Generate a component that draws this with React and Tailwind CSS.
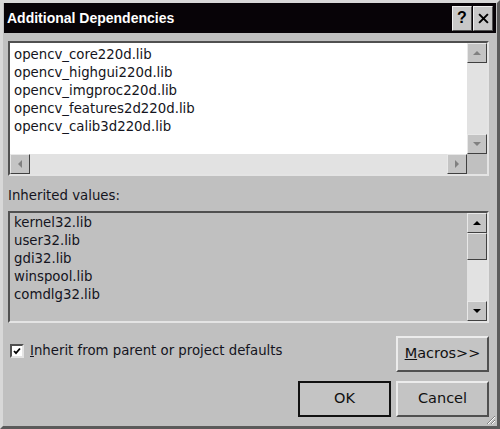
import React from 'react';

const font = { fontFamily: '"DejaVu Sans", "Liberation Sans", sans-serif' };

const Arrow = ({ dir, color }) => {
  const pts = {
    up: '1,5 5,1 9,5',
    down: '1,1 5,5 9,1',
    left: '5,1 1,5 5,9',
    right: '1,1 5,5 1,9',
  }[dir];
  const vb = dir === 'up' || dir === 'down' ? '0 0 10 6' : '0 0 6 10';
  const size = dir === 'up' || dir === 'down' ? 'w-[10px] h-[6px]' : 'w-[6px] h-[10px]';
  return (
    <svg viewBox={vb} className={size}>
      <polygon points={pts} fill={color} />
    </svg>
  );
};

const ScrollBtn = ({ dir, color = '#808080', className = '' }) => (
  <div
    className={`w-[20px] h-[20px] shrink-0 flex items-center justify-center bg-[#c4c4c4] border border-t-[#e8e8e8] border-l-[#e8e8e8] border-r-[#404040] border-b-[#404040] ${className}`}
  >
    <Arrow dir={dir} color={color} />
  </div>
);

const Button = ({ children, isDefault }) => (
  <button
    className={`w-[93px] h-[36px] flex items-center justify-center text-[14.5px] text-[#111] bg-[#c4c4c4] ${
      isDefault
        ? 'border-2 border-[#111]'
        : 'border-2 border-t-[#ececec] border-l-[#ececec] border-r-[#505050] border-b-[#505050]'
    }`}
    style={font}
  >
    {children}
  </button>
);

export default function App() {
  const deps = [
    'opencv_core220d.lib',
    'opencv_highgui220d.lib',
    'opencv_imgproc220d.lib',
    'opencv_features2d220d.lib',
    'opencv_calib3d220d.lib',
  ];
  const inherited = ['kernel32.lib', 'user32.lib', 'gdi32.lib', 'winspool.lib', 'comdlg32.lib'];

  return (
    <div
      className="w-[500px] h-[429px] bg-[#c0c0c0] border-[3px] border-t-[#d8d8d8] border-l-[#d8d8d8] border-r-[#5a5a5a] border-b-[#5a5a5a] flex flex-col relative overflow-hidden"
      style={font}
    >
      {/* title bar */}
      <div className="mx-[1px] h-[30px] bg-[#070307] flex items-center justify-between pl-[3px] pr-[3px]">
        <span
          className="text-white font-bold text-[14px]"
          style={{ fontFamily: '"Liberation Sans", Arial, sans-serif' }}
        >
          Additional Dependencies
        </span>
        <div className="flex gap-[1px]">
          <div className="w-[20px] h-[25px] bg-[#c8c8c8] border border-t-[#f0f0f0] border-l-[#f0f0f0] border-r-[#505050] border-b-[#505050] flex items-center justify-center text-black font-bold text-[16px]" style={{ fontFamily: '"Liberation Sans", sans-serif' }}>
            ?
          </div>
          <div className="w-[20px] h-[25px] bg-[#c8c8c8] border border-t-[#f0f0f0] border-l-[#f0f0f0] border-r-[#505050] border-b-[#505050] flex items-center justify-center">
            <svg viewBox="0 0 10 10" className="w-[11px] h-[11px]">
              <path d="M1 1 L9 9 M9 1 L1 9" stroke="#000" strokeWidth="1.8" />
            </svg>
          </div>
        </div>
      </div>

      <div className="pl-[5px] pr-[8px] pt-[8px] flex flex-col">
        {/* top list */}
        <div className="w-[481px] h-[135px] border-2 border-t-[#505050] border-l-[#505050] border-r-[#e4e4e4] border-b-[#e4e4e4] flex flex-col">
          <div className="flex flex-1 min-h-0">
            <div className="flex-1 bg-white pl-[4px] pt-[3px] text-[13.3px] leading-[18px] text-[#141420]">
              {deps.map((d) => (
                <div key={d}>{d}</div>
              ))}
            </div>
            <div className="w-[20px] flex flex-col bg-[#e2e2e2]">
              <ScrollBtn dir="up" />
              <div className="flex-1" />
              <ScrollBtn dir="down" />
            </div>
          </div>
          <div className="h-[20px] flex">
            <div className="flex-1 flex bg-[#e2e2e2]">
              <ScrollBtn dir="left" />
              <div className="flex-1" />
              <ScrollBtn dir="right" />
            </div>
            <div className="w-[20px] bg-[#c0c0c0]" />
          </div>
        </div>

        <div className="mt-[11px] h-[18px] text-[13.3px] leading-[18px] text-[#141420]">Inherited values:</div>

        {/* inherited list */}
        <div className="mt-[6px] w-[481px] h-[112px] border-2 border-t-[#505050] border-l-[#505050] border-r-[#e4e4e4] border-b-[#e4e4e4] flex">
          <div className="flex-1 pl-[4px] pt-[1px] text-[13.3px] leading-[18px] text-[#141420]">
            {inherited.map((d) => (
              <div key={d}>{d}</div>
            ))}
          </div>
          <div className="w-[20px] flex flex-col">
            <ScrollBtn dir="up" color="#000" />
            <div className="h-[27px] bg-[#c0c0c0] border border-t-[#e8e8e8] border-l-[#e8e8e8] border-r-[#404040] border-b-[#404040]" />
            <div className="flex-1 bg-[#e2e2e2]" />
            <ScrollBtn dir="down" color="#000" />
          </div>
        </div>

        {/* checkbox + macros */}
        <div className="mt-[13px] flex items-start justify-between">
          <div className="flex items-center gap-[6px] pl-[2px] pt-[6px]">
            <div className="w-[14px] h-[14px] bg-white border-2 border-t-[#505050] border-l-[#505050] border-r-[#e4e4e4] border-b-[#e4e4e4] flex items-center justify-center">
              <svg viewBox="0 0 8 8" className="w-[8px] h-[8px]">
                <path d="M1 4 L3 6.2 L7 1.5" stroke="#000" strokeWidth="1.8" fill="none" />
              </svg>
            </div>
            <span className="text-[13.3px] leading-[18px] text-[#141420]">
              <span className="underline">I</span>nherit from parent or project defaults
            </span>
          </div>
          <Button>
            <span className="underline">M</span>acros&gt;&gt;
          </Button>
        </div>

        <div className="mt-[9px] flex justify-end gap-[5px]">
          <Button isDefault>OK</Button>
          <Button>Cancel</Button>
        </div>
      </div>

      {/* resize grip */}
      <svg viewBox="0 0 12 12" className="absolute right-[1px] bottom-[1px] w-[12px] h-[12px]">
        <path d="M11 3 L3 11 M11 7 L7 11" stroke="#808080" strokeWidth="1" />
        <path d="M11 4 L4 11 M11 8 L8 11" stroke="#ffffff" strokeWidth="1" />
      </svg>
    </div>
  );
}
